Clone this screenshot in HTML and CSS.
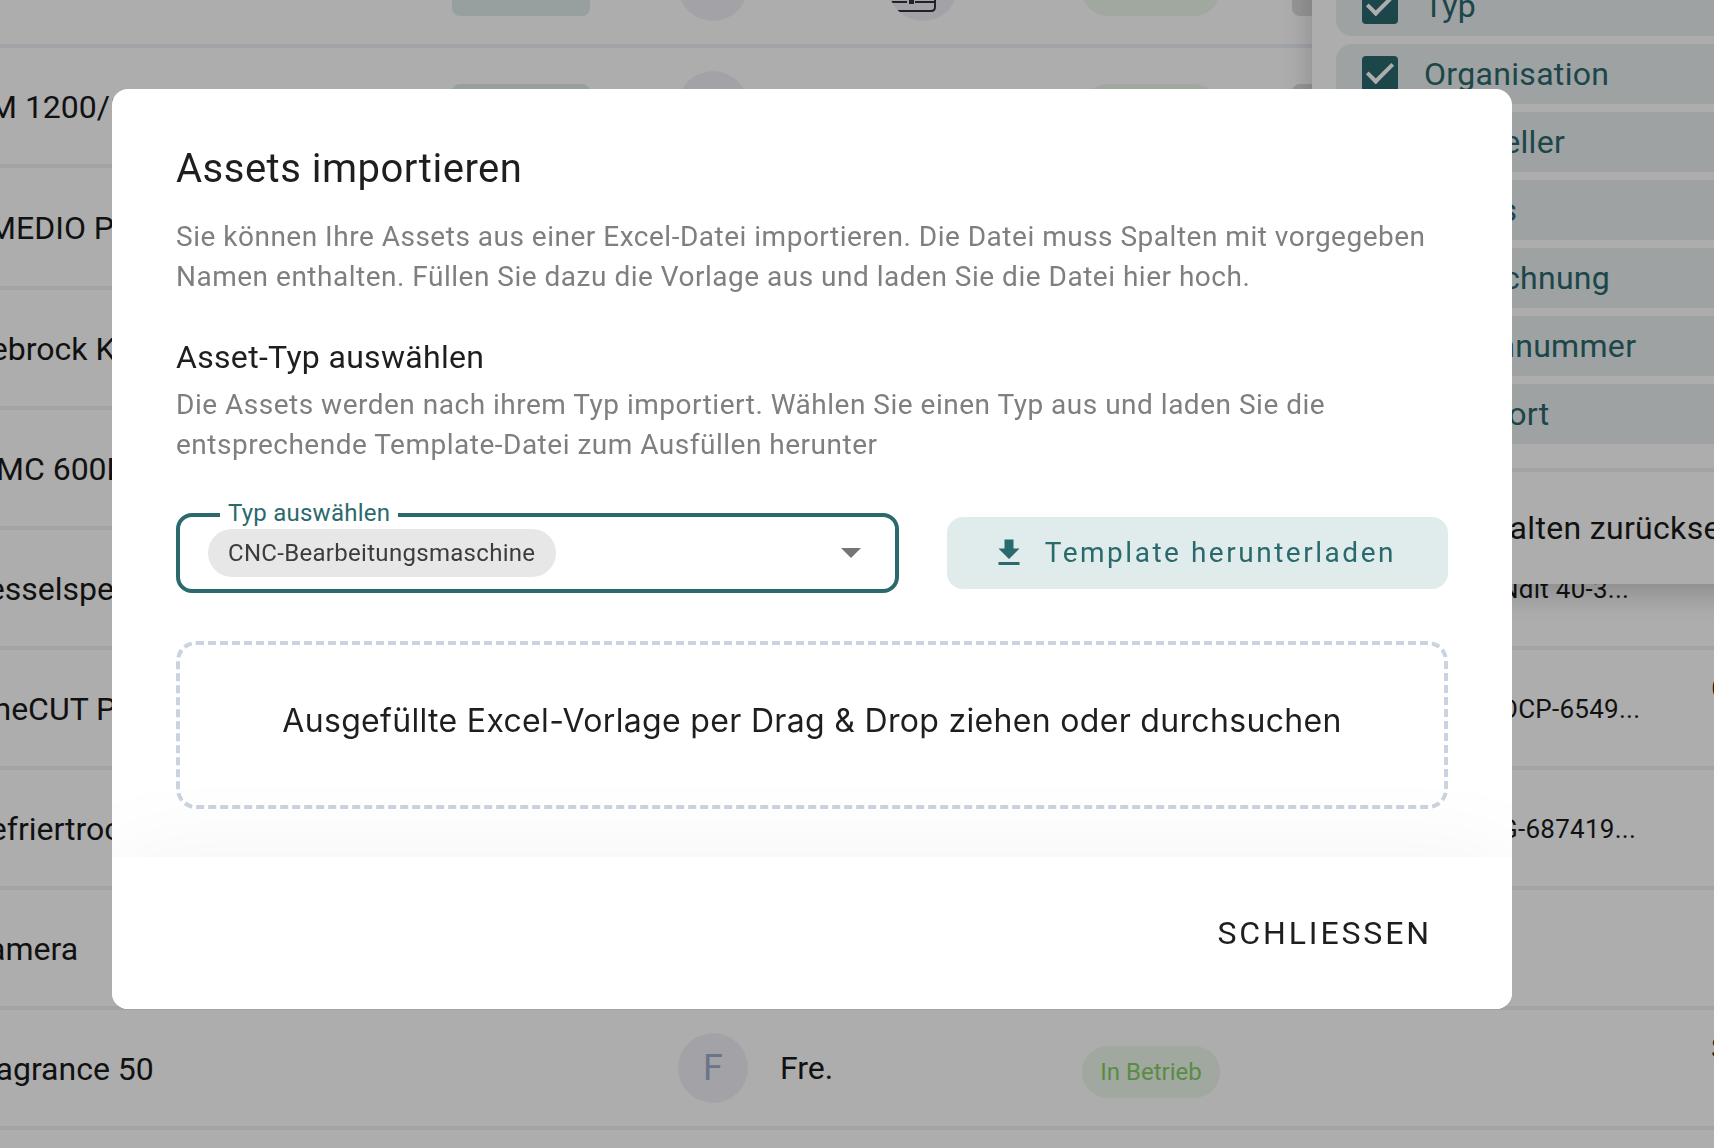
FILE: index.html
```html
<!DOCTYPE html>
<html lang="de">
<head>
<meta charset="UTF-8">
<meta name="viewport" content="width=device-width, initial-scale=1.0">
<title>Assets importieren</title>
<link rel="stylesheet" href="styles.css">
</head>
<body>
<main class="page">
    <table class="assets">
        <colgroup>
            <col class="col-name">
            <col class="col-type">
            <col class="col-org">
            <col class="col-maker">
            <col class="col-status">
            <col class="col-tag">
            <col class="col-serial">
            <col class="col-place">
        </colgroup>
        <tbody>
            <tr>
                <td></td>
                <td><span class="tag"></span></td>
                <td><span class="avatar"></span></td>
                <td>
                    <span class="avatar">
                        <svg class="machine" viewBox="0 0 70 70" aria-hidden="true">
                            <path d="M0 51H19M27 51H48M0 60H43Q47 60 47 56V40" fill="none" stroke="#2f3437" stroke-width="2"/>
                            <path d="M21 44H26V53H21Z" fill="#2f3437"/>
                        </svg>
                    </span>
                </td>
                <td><span class="status"></span></td>
                <td><span class="tag grey"></span></td>
                <td></td>
                <td></td>
            </tr>
            <tr>
                <td>DM 1200/1</td>
                <td><span class="tag"></span></td>
                <td><span class="avatar"></span></td>
                <td></td>
                <td><span class="status"></span></td>
                <td><span class="tag grey"></span></td>
                <td></td>
                <td></td>
            </tr>
            <tr class="tall">
                <td>KMEDIO P</td>
                <td></td><td></td><td></td><td></td><td></td><td></td><td></td>
            </tr>
            <tr>
                <td>Hebrock K</td>
                <td></td><td></td><td></td><td></td><td></td><td></td><td></td>
            </tr>
            <tr>
                <td>MMC 600L</td>
                <td></td><td></td><td></td><td></td><td></td><td></td><td></td>
            </tr>
            <tr>
                <td>Kesselspeise</td>
                <td></td><td></td><td></td><td></td><td></td>
                <td class="serial">Ndlt 40-3...</td>
                <td></td>
            </tr>
            <tr>
                <td>FineCUT P</td>
                <td></td><td></td><td></td><td></td><td></td>
                <td class="serial">OCP-6549...</td>
                <td>C<br>&nbsp;</td>
            </tr>
            <tr>
                <td>Gefriertrock</td>
                <td></td><td></td><td></td><td></td><td></td>
                <td class="serial">G-687419...</td>
                <td></td>
            </tr>
            <tr>
                <td>Kamera</td>
                <td></td><td></td><td></td><td></td><td></td><td></td><td></td>
            </tr>
            <tr>
                <td>Fragrance 50</td>
                <td></td>
                <td><div class="person"><span class="avatar">F</span>Fre.</div></td>
                <td></td>
                <td><span class="status">In Betrieb</span></td>
                <td></td>
                <td></td>
                <td>S<br>&nbsp;</td>
            </tr>
        </tbody>
    </table>

    <aside class="menu">
        <div class="menu-list">
            <label class="menu-item"><input type="checkbox" checked>Typ</label>
            <label class="menu-item"><input type="checkbox" checked>Organisation</label>
            <label class="menu-item"><input type="checkbox" checked>Hersteller</label>
            <label class="menu-item"><input type="checkbox" checked>Status</label>
            <label class="menu-item"><input type="checkbox" checked>Bezeichnung</label>
            <label class="menu-item"><input type="checkbox" checked>Seriennummer</label>
            <label class="menu-item"><input type="checkbox" checked>Standort</label>
        </div>
        <button type="button" class="menu-reset">Spalten zurücksetzen</button>
    </aside>
</main>

<div class="overlay">
    <div class="dialog" role="dialog" aria-modal="true" aria-labelledby="dialog-title">
        <div class="dialog-body">
            <h1 id="dialog-title">Assets importieren</h1>
            <p>Sie können Ihre Assets aus einer Excel-Datei importieren. Die Datei muss Spalten mit vorgegeben Namen enthalten. Füllen Sie dazu die Vorlage aus und laden Sie die Datei hier hoch.</p>
            <h2>Asset-Typ auswählen</h2>
            <p>Die Assets werden nach ihrem Typ importiert. Wählen Sie einen Typ aus und laden Sie die entsprechende Template-Datei zum Ausfüllen herunter</p>
            <div class="controls">
                <div class="field">
                    <label for="asset-type">Typ auswählen</label>
                    <select id="asset-type">
                        <option>CNC-Bearbeitungsmaschine</option>
                    </select>
                    <svg class="arrow" viewBox="0 0 20 10" aria-hidden="true"><path d="M0 0H20L10 10Z" fill="#757575"/></svg>
                </div>
                <button type="button" class="download">
                    <svg viewBox="0 0 24 24" aria-hidden="true"><path d="M5 20H19V18H5M19 9H15V3H9V9H5L12 16L19 9Z" fill="currentColor"/></svg>
                    Template herunterladen
                </button>
            </div>
            <label class="dropzone">
                <input type="file" accept=".xlsx,.xls">
                Ausgefüllte Excel-Vorlage per Drag &amp; Drop ziehen oder durchsuchen
            </label>
        </div>
        <div class="dialog-footer">
            <button type="button" class="close">SCHLIESSEN</button>
        </div>
    </div>
</div>
</body>
</html>
```
FILE: styles.css
```css
* {
    box-sizing: border-box;
}

body {
    margin: 0;
    overflow: hidden;
    background-color: #fff;
    color: #1e1e1e;
    font-family: Roboto, "Liberation Sans", sans-serif;
    font-size: 32px;
    line-height: 40px;
}

button,
select {
    border: 0;
    font: inherit;
    cursor: pointer;
}

/* Asset table behind the dialog, scrolled */
.page {
    height: 100vh;
    overflow: hidden;
}

.assets {
    width: calc(100% + 232px);
    margin: -72px 0 0 -32px;
    table-layout: fixed;
    border-spacing: 0;
    color: #1a1a1a;
}

.col-name { width: 484px; }
.col-type { width: 226px; }
.col-org { width: 210px; }
.col-maker { width: 194px; }
.col-status { width: 210px; }
.col-tag { width: 208px; }
.col-serial { width: 211px; }

.assets td {
    height: 120px;
    padding: 0;
    border-bottom: 4px solid #edf1f7;
    white-space: nowrap;
}

.assets td:first-child {
    padding-top: 2px;
}

.assets .tall td {
    height: 122px;
}

.assets .serial {
    font-size: 26px;
    padding-top: 2px;
    letter-spacing: 0.01em;
}

.tag,
.status {
    display: block;
    width: 138px;
    height: 52px;
    margin-top: 8px;
    background-color: #e0eceb;
    border-radius: 8px;
}

.tag.grey {
    background-color: #dedede;
}

.status {
    background-color: #eef8eb;
    border-radius: 26px;
    color: #84cf63;
    font-size: 24px;
    line-height: 52px;
    text-align: center;
}

.avatar {
    display: block;
    width: 70px;
    height: 70px;
    overflow: hidden;
    background-color: #f0f1f6;
    border-radius: 50%;
    color: #9cadc9;
    font-size: 36px;
    line-height: 70px;
    text-align: center;
}

.machine {
    display: block;
}

.person {
    display: flex;
    align-items: center;
    gap: 32px;
}

/* Column menu */
.menu {
    position: absolute;
    top: -48px;
    right: -40px;
    width: 442px;
    background-color: #fff;
    box-shadow: 0 12px 24px rgba(0, 0, 0, 0.08), 0 6px 28px 4px rgba(0, 0, 0, 0.12);
}

.menu-list {
    display: flex;
    flex-direction: column;
    gap: 8px;
    padding: 24px;
    border-bottom: 4px solid #edf1f7;
}

.menu-item {
    display: flex;
    align-items: center;
    gap: 26px;
    height: 60px;
    padding-left: 26px;
    background-color: #e9efef;
    border-radius: 16px;
    color: #2a686c;
    letter-spacing: 0.01em;
}

.menu-item input {
    appearance: none;
    width: 36px;
    height: 36px;
    margin: 0;
    background: #2a686c;
    border-radius: 4px;
}

.menu-item input::before {
    content: "";
    display: block;
    width: 22px;
    height: 10px;
    margin: 7px 0 0 5px;
    border: solid #fff;
    border-width: 0 0 4px 4px;
    transform: rotate(-45deg);
}

.menu-reset {
    width: 100%;
    height: 112px;
    padding: 0 0 0 160px;
    background: none;
    color: #1a1a1a;
    letter-spacing: 0.01em;
    text-align: left;
    white-space: nowrap;
}

/* Dialog */
.overlay {
    position: fixed;
    inset: 0;
    display: flex;
    align-items: flex-start;
    padding: 89px 202px 0 112px;
    background-color: rgba(0, 0, 0, 0.32);
}

.dialog {
    flex: 1;
    overflow: hidden;
    background-color: #fff;
    border-radius: 16px;
}

.dialog-body {
    padding: 48px 64px;
}

h1 {
    margin: 0 0 16px;
    font-size: 40px;
    font-weight: 400;
    line-height: 64px;
    letter-spacing: 0.0125em;
}

h2 {
    margin: 34px 0 2px;
    font-size: 32px;
    font-weight: 400;
    line-height: 52px;
    letter-spacing: 0.01em;
}

p {
    margin: 0;
    color: #7f7f7f;
    font-size: 28px;
    line-height: 40px;
    letter-spacing: 0.018em;
}

.controls {
    display: flex;
    align-items: center;
    gap: 48px;
    margin: 48px 0;
}

.field {
    position: relative;
    flex: 1;
    display: flex;
    align-items: center;
    justify-content: space-between;
    height: 80px;
    padding: 0 34px 0 28px;
    border: 4px solid #2a6a6d;
    border-radius: 16px;
}

.field label {
    position: absolute;
    top: -20px;
    left: 40px;
    padding: 0 8px;
    background-color: #fff;
    color: #2a6a6d;
    font-size: 24px;
    line-height: 32px;
    letter-spacing: 0.01em;
}

.field select {
    appearance: none;
    height: 48px;
    padding: 0 20px;
    background-color: #e7e7e7;
    border-radius: 24px;
    color: #3c3c3c;
    font-size: 24px;
    letter-spacing: 0.0125em;
}

.arrow {
    width: 20px;
    height: 10px;
}

.download {
    display: flex;
    align-items: center;
    gap: 18px;
    height: 72px;
    padding: 0 52px 0 44px;
    background-color: #e0eceb;
    border-radius: 16px;
    color: #2a6a6d;
    font-size: 28px;
    letter-spacing: 0.09em;
}

.download svg {
    width: 36px;
    height: 36px;
}

.dropzone {
    display: block;
    padding: 56px 0 64px;
    border: 4px dashed #cbd3e1;
    border-radius: 20px;
    font-family: Inter, sans-serif;
    font-size: 32px;
    letter-spacing: 0.01em;
    text-align: center;
}

.dropzone input {
    display: none;
}

.dialog-footer {
    display: flex;
    justify-content: flex-end;
    padding: 40px 64px;
    background-color: #fff;
    box-shadow: 0 0 100px rgba(0, 0, 0, 0.05);
}

.close {
    height: 72px;
    padding: 0 16px;
    background: none;
    color: #1e1e1e;
    letter-spacing: 0.09em;
}
```
